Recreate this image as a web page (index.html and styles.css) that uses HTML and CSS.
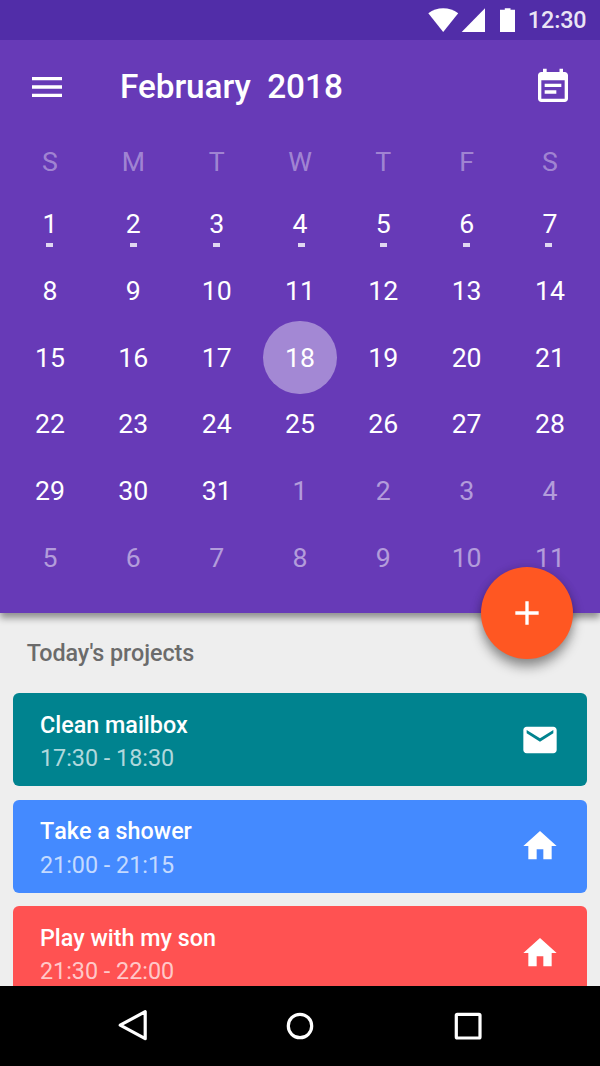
FILE: index.html
```html
<!DOCTYPE html>
<html lang="en">
<head>
<meta charset="utf-8">
<title>Calendar</title>
<link rel="stylesheet" href="styles.css">
</head>
<body>
<div class="screen">
  <header class="calendar">
    <div class="status-bar">
      <svg class="status-icons" width="90" height="26" viewBox="0 0 90 26" fill="#fff">
        <path d="M.3 5.2C4.700 2 9.800.2 15.200.2S25.800 2 30.200 5.200L15.200 23.900z"/>
        <path d="M57 .3V23.900H33.700z"/>
        <path d="M72 1.700h4.800V.2h5.700v1.500H87V23.900H72z"/>
      </svg>
      <span class="clock">12:30</span>
    </div>
    <div class="app-bar">
      <svg class="icon" viewBox="0 0 24 24"><path d="M3 18h18v-2H3v2zm0-5h18v-2H3v2zm0-7v2h18V6H3z"/></svg>
      <h1 class="title">February&nbsp; 2018</h1>
      <svg class="icon" viewBox="0 0 24 24"><path fill-rule="evenodd" d="M5 3h1V1h2.200v2h7.700V1H18v2h1c1.100 0 2 .9 2 2v14c0 1.100-.9 2-2 2H5c-1.100 0-2-.9-2-2V5c0-1.100.9-2 2-2zm0 5v11h14V8zM7 10h10v2H7zM7 14h7v2H7z"/></svg>
    </div>
    <div class="weekdays">
      <span>S</span><span>M</span><span>T</span><span>W</span><span>T</span><span>F</span><span>S</span>
    </div>
    <div class="days">
      <span class="marked">1</span><span class="marked">2</span><span class="marked">3</span><span class="marked shift-right">4</span><span class="marked">5</span><span class="marked">6</span><span class="marked shift-left">7</span>
      <span>8</span><span>9</span><span>10</span><span>11</span><span>12</span><span>13</span><span>14</span>
      <span>15</span><span>16</span><span>17</span><span class="selected">18</span><span>19</span><span>20</span><span>21</span>
      <span>22</span><span>23</span><span>24</span><span>25</span><span>26</span><span>27</span><span>28</span>
      <span>29</span><span>30</span><span>31</span><span class="other">1</span><span class="other">2</span><span class="other">3</span><span class="other">4</span>
      <span class="other">5</span><span class="other">6</span><span class="other">7</span><span class="other">8</span><span class="other">9</span><span class="other">10</span><span class="other">11</span>
    </div>
    <button class="fab" aria-label="Add">
      <svg class="icon" viewBox="0 0 24 24"><path d="M19 13h-6v6h-2v-6H5v-2h6V5h2v6h6v2z"/></svg>
    </button>
  </header>
  <main class="projects">
    <h2 class="heading">Today's projects</h2>
    <article class="card teal">
      <div class="details"><h3 class="name">Clean mailbox</h3><p class="time">17:30 - 18:30</p></div>
      <svg class="icon" viewBox="0 0 24 24"><path d="M20 4H4c-1.100 0-1.990.9-1.990 2L2 18c0 1.100.9 2 2 2h16c1.100 0 2-.9 2-2V6c0-1.100-.9-2-2-2zm0 4l-8 5-8-5V6l8 5 8-5v2z"/></svg>
    </article>
    <article class="card blue">
      <div class="details"><h3 class="name unkerned">Take a shower</h3><p class="time">21:00 - 21:15</p></div>
      <svg class="icon" viewBox="0 0 24 24"><path d="M10 20v-6h4v6h5v-8h3L12 3 2 12h3v8z"/></svg>
    </article>
    <article class="card red">
      <div class="details"><h3 class="name">Play with my son</h3><p class="time">21:30 - 22:00</p></div>
      <svg class="icon" viewBox="0 0 24 24"><path d="M10 20v-6h4v6h5v-8h3L12 3 2 12h3v8z"/></svg>
    </article>
  </main>
  <nav class="nav-bar">
    <svg width="32" height="36" viewBox="0 0 32 36"><path d="M29.200 4.700V31.700L4.200 18.200z"/></svg>
    <svg width="32" height="36" viewBox="0 0 32 36"><circle cx="16" cy="19" r="11.700"/></svg>
    <svg width="32" height="36" viewBox="0 0 32 36"><rect x="4.300" y="7.300" width="23.700" height="23.700" rx="1"/></svg>
  </nav>
</div>
</body>
</html>
```

FILE: styles.css
```css
* {
  box-sizing: border-box;
  margin: 0;
}

body {
  font-family: Roboto, sans-serif;
  color: #fff;
  background: #eee;
}

.screen {
  display: flex;
  flex-direction: column;
  width: 600px;
  height: 1066px;
  overflow: hidden;
}

.calendar {
  position: relative;
  z-index: 1;
  flex: none;
  height: 613px;
  background: #673ab7;
  box-shadow: 0 5px 7px rgba(0, 0, 0, 0.4);
}

.status-bar {
  display: flex;
  justify-content: flex-end;
  align-items: center;
  gap: 10px;
  height: 40px;
  padding-right: 13.500px;
  background: #512da8;
}

.status-icons {
  margin-top: 2px;
}

.clock {
  font-size: 23.33px;
  font-weight: 500;
  line-height: 42px;
  letter-spacing: -0.1px;
  color: rgba(255, 255, 255, 0.9);
}

.icon {
  flex: none;
  width: 40px;
  height: 40px;
  fill: #fff;
}

.app-bar {
  display: flex;
  align-items: center;
  height: 93.33px;
  padding: 0 26.67px;
}

.title {
  flex: 1;
  margin-left: 53.33px;
  font-size: 33.33px;
  font-weight: 500;
  letter-spacing: -0.06px;
}

.weekdays,
.days {
  display: grid;
  grid-template-columns: repeat(7, 83.33px);
  padding: 0 8.33px;
  font-size: 26.67px;
}

.weekdays {
  height: 57.67px;
  line-height: 59px;
  text-align: center;
  color: rgba(255, 255, 255, 0.4);
}

.days {
  grid-auto-rows: 66.67px;
}

.days span {
  display: flex;
  align-items: center;
  justify-content: center;
}

.days .marked {
  position: relative;
}

.marked::after {
  content: "";
  position: absolute;
  left: 50%;
  bottom: 11px;
  width: 7px;
  height: 4px;
  margin-left: -3.500px;
  background: rgba(255, 255, 255, 0.8);
}

.shift-right::after {
  margin-left: -2px;
}

.shift-left::after {
  margin-left: -5px;
}

.days .selected {
  width: 73.33px;
  height: 73.33px;
  margin: -3.33px 5px;
  border-radius: 50%;
  background: rgba(255, 255, 255, 0.4);
}

.days .other {
  color: rgba(255, 255, 255, 0.5);
}

.fab {
  position: absolute;
  right: 27px;
  bottom: -46px;
  display: flex;
  align-items: center;
  justify-content: center;
  width: 92.500px;
  height: 92.500px;
  padding: 0;
  border: 0;
  border-radius: 50%;
  background: #ff5722;
  box-shadow: 0 8px 12px rgba(0, 0, 0, 0.38), 0 0 10px rgba(0, 0, 0, 0.12);
}

.projects {
  flex: 1;
  display: flex;
  flex-direction: column;
  gap: 13.33px;
  min-height: 0;
  padding: 0 13.33px;
  overflow: hidden;
}

.heading {
  height: 66.67px;
  padding-left: 13.33px;
  font-size: 23.33px;
  font-weight: 500;
  line-height: 81px;
  letter-spacing: -0.05px;
  color: #6b6b6b;
}

.card {
  flex: none;
  display: flex;
  align-items: center;
  justify-content: space-between;
  height: 93.33px;
  padding: 0 26.67px;
  border-radius: 6px;
}

.teal {
  background: #00838f;
}

.blue {
  background: #448aff;
}

.red {
  background: #ff5252;
}

.details {
  padding-top: 5px;
}

.name {
  font-size: 23.33px;
  font-weight: 500;
  line-height: 33.33px;
}

.unkerned {
  font-kerning: none;
}

.time {
  font-size: 23.33px;
  line-height: 33.33px;
  color: rgba(255, 255, 255, 0.7);
}

.nav-bar {
  flex: none;
  display: flex;
  justify-content: space-between;
  height: 80px;
  padding: 21px 116px 0;
  background: #000;
}

.nav-bar svg {
  fill: none;
  stroke: #fff;
  stroke-width: 3.200;
  stroke-linejoin: round;
}
```
